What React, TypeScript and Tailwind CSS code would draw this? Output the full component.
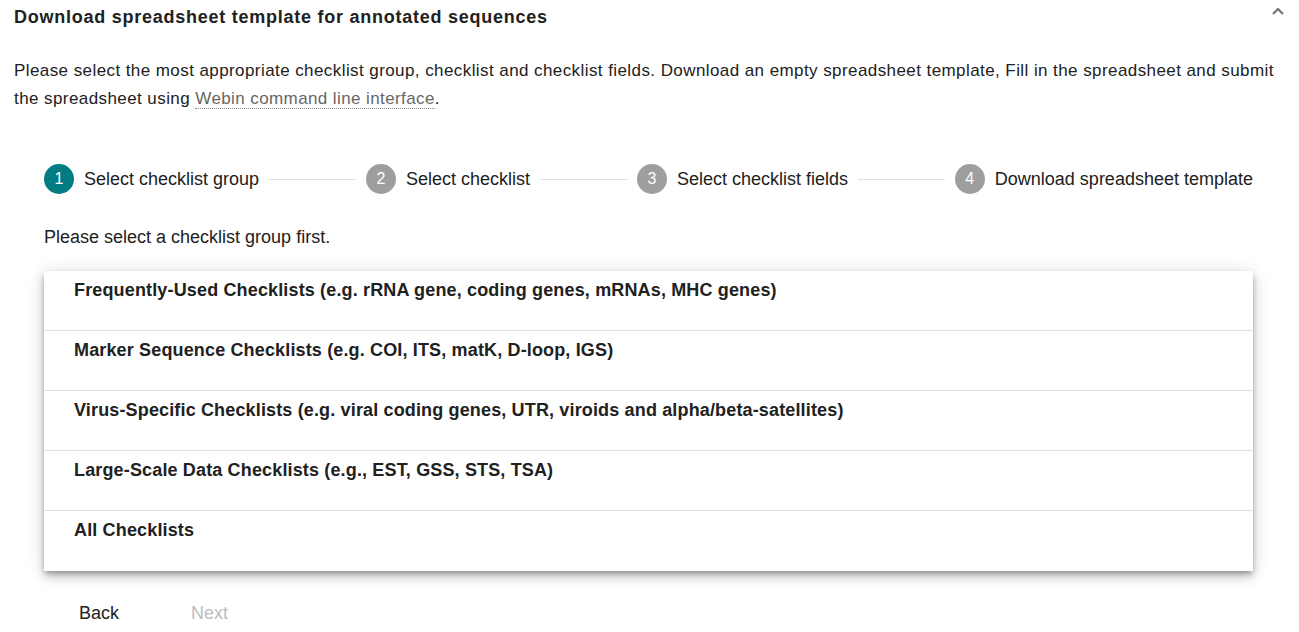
import React from "react";

const steps = [
  { n: 1, label: "Select checklist group", active: true },
  { n: 2, label: "Select checklist", active: false },
  { n: 3, label: "Select checklist fields", active: false },
  { n: 4, label: "Download spreadsheet template", active: false },
];

const groups = [
  "Frequently-Used Checklists (e.g. rRNA gene, coding genes, mRNAs, MHC genes)",
  "Marker Sequence Checklists (e.g. COI, ITS, matK, D-loop, IGS)",
  "Virus-Specific Checklists (e.g. viral coding genes, UTR, viroids and alpha/beta-satellites)",
  "Large-Scale Data Checklists (e.g., EST, GSS, STS, TSA)",
  "All Checklists",
];

export default function App() {
  return (
    <div
      className="w-[1299px] h-[632px] bg-white text-[#212121] overflow-hidden"
      style={{ fontFamily: '"Liberation Sans", Arial, sans-serif' }}
    >
      <div className="flex h-[34px] items-center justify-between pl-[14px] pr-[14px]">
        <div className="text-[18px] font-bold leading-none tracking-[0.75px]">
          Download spreadsheet template for annotated sequences
        </div>
        <svg width="14" height="10" viewBox="0 0 14 10" className="-mt-[12px]">
          <path d="M2 8 L7 3 L12 8" fill="none" stroke="#757575" strokeWidth="2.2" />
        </svg>
      </div>

      <p className="mt-[23px] px-[14px] text-[17px] leading-[28px] tracking-[0.42px]">
        Please select the most appropriate checklist group, checklist and checklist fields. Download an empty
        spreadsheet template, Fill in the spreadsheet and submit the spreadsheet using{" "}
        <a className="text-[#666666] border-b border-dotted border-[#888] tracking-[0.4px]">Webin command line interface</a>.
      </p>

      <div className="pl-[44px] pr-[46px]">
        <div className="mt-[51px] flex h-[30px] items-center">
          {steps.map((s, i) => (
            <React.Fragment key={s.n}>
              <div className="flex items-center">
                <div
                  className={
                    "flex h-[30px] w-[30px] items-center justify-center rounded-full text-[16px] text-white " +
                    (s.active ? "bg-[#007c82]" : "bg-[#9e9e9e]")
                  }
                >
                  {s.n}
                </div>
                <span className="ml-[10px] text-[18px] leading-none">{s.label}</span>
              </div>
              {i < steps.length - 1 && <div className="mx-[10px] h-px flex-1 bg-[#e0e0e0]" />}
            </React.Fragment>
          ))}
        </div>

        <div className="mt-[33px] text-[18px] leading-[20px]">Please select a checklist group first.</div>

        <div className="mt-[24px] bg-white shadow-[0_3px_5px_-1px_rgba(0,0,0,0.3),0_6px_10px_0_rgba(0,0,0,0.18),0_1px_18px_0_rgba(0,0,0,0.12)]">
          {groups.map((g, i) => (
            <div
              key={g}
              className={
                "h-[60px] pl-[30px] pt-[9px] text-[18px] font-bold leading-[20px] tracking-[0.15px] " +
                (i < groups.length - 1 ? "border-b border-[#e0e0e0]" : "")
              }
            >
              {g}
            </div>
          ))}
        </div>

        <div className="mt-[24px] flex h-[36px] items-center text-[18px]">
          <button className="ml-[19px] px-[16px] h-[36px]">Back</button>
          <button className="ml-[40px] px-[16px] h-[36px] text-[#bdbdbd]">Next</button>
        </div>
      </div>
    </div>
  );
}
